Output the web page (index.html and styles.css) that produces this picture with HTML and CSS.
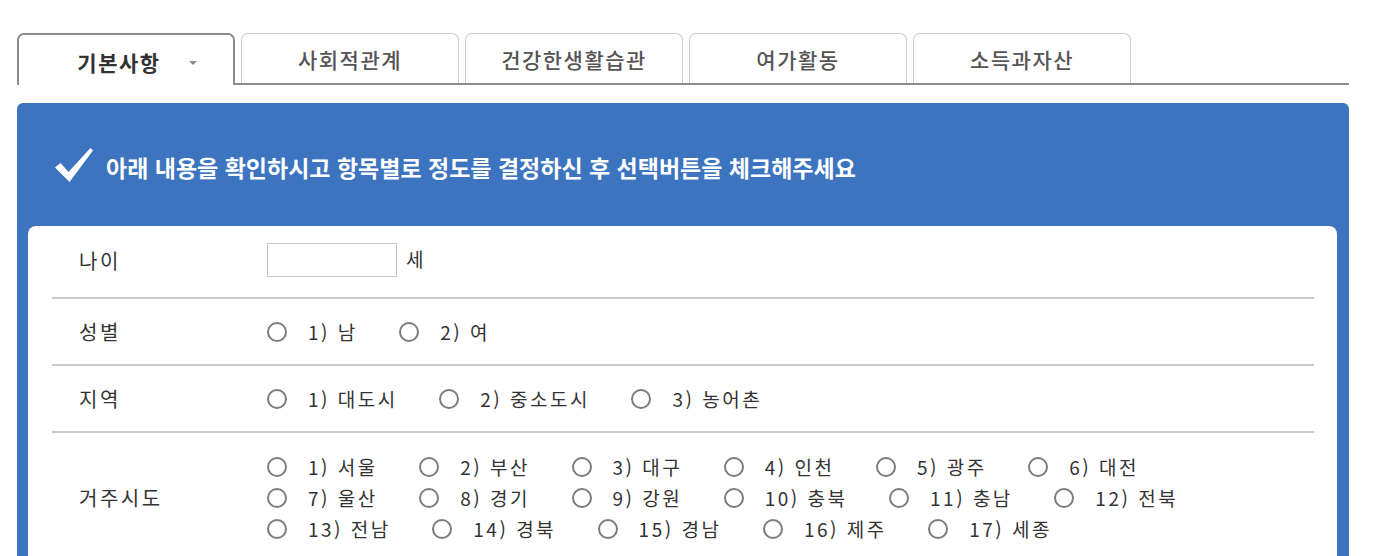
FILE: index.html
```html
<!DOCTYPE html>
<html lang="ko">
<head>
<meta charset="utf-8">
<title>기본사항</title>
<link rel="stylesheet" href="styles.css">
</head>
<body>
<div class="page">
  <nav class="tabs">
    <div class="tab active"><span>기본사항</span><span class="caret"></span></div>
    <div class="tab">사회적관계</div>
    <div class="tab">건강한생활습관</div>
    <div class="tab">여가활동</div>
    <div class="tab">소득과자산</div>
  </nav>

  <section class="panel">
    <header class="panel-head">
      <svg class="check" width="38" height="34" viewBox="0 0 38 34">
        <path d="M0 19.5 L5.5 15 L13.5 24 L35.5 0 L38 2.5 L14.5 34 Z" fill="#fff"/>
      </svg>
      <h1>아래 내용을 확인하시고 항목별로 정도를 결정하신 후 선택버튼을 체크해주세요</h1>
    </header>

    <div class="panel-body">
      <div class="row first">
        <div class="label">나이</div>
        <div class="value">
          <input class="age" type="text"><span class="unit">세</span>
        </div>
      </div>

      <div class="row">
        <div class="label">성별</div>
        <div class="value">
          <div class="line">
            <label class="opt"><input type="radio" name="sex"><span>1) 남</span></label>
            <label class="opt"><input type="radio" name="sex"><span>2) 여</span></label>
          </div>
        </div>
      </div>

      <div class="row">
        <div class="label">지역</div>
        <div class="value">
          <div class="line">
            <label class="opt"><input type="radio" name="area"><span>1) 대도시</span></label>
            <label class="opt"><input type="radio" name="area"><span>2) 중소도시</span></label>
            <label class="opt"><input type="radio" name="area"><span>3) 농어촌</span></label>
          </div>
        </div>
      </div>

      <div class="row last">
        <div class="label">거주시도</div>
        <div class="value">
          <div class="line">
            <label class="opt"><input type="radio" name="city"><span>1) 서울</span></label>
            <label class="opt"><input type="radio" name="city"><span>2) 부산</span></label>
            <label class="opt"><input type="radio" name="city"><span>3) 대구</span></label>
            <label class="opt"><input type="radio" name="city"><span>4) 인천</span></label>
            <label class="opt"><input type="radio" name="city"><span>5) 광주</span></label>
            <label class="opt"><input type="radio" name="city"><span>6) 대전</span></label>
          </div>
          <div class="line">
            <label class="opt"><input type="radio" name="city"><span>7) 울산</span></label>
            <label class="opt"><input type="radio" name="city"><span>8) 경기</span></label>
            <label class="opt"><input type="radio" name="city"><span>9) 강원</span></label>
            <label class="opt"><input type="radio" name="city"><span>10) 충북</span></label>
            <label class="opt"><input type="radio" name="city"><span>11) 충남</span></label>
            <label class="opt"><input type="radio" name="city"><span>12) 전북</span></label>
          </div>
          <div class="line">
            <label class="opt"><input type="radio" name="city"><span>13) 전남</span></label>
            <label class="opt"><input type="radio" name="city"><span>14) 경북</span></label>
            <label class="opt"><input type="radio" name="city"><span>15) 경남</span></label>
            <label class="opt"><input type="radio" name="city"><span>16) 제주</span></label>
            <label class="opt"><input type="radio" name="city"><span>17) 세종</span></label>
          </div>
        </div>
      </div>
    </div>
  </section>
</div>
</body>
</html>
```

FILE: styles.css
```css
* { box-sizing: border-box; }

html, body {
  margin: 0;
  padding: 0;
  background: #fff;
}

body {
  font-family: "Noto Sans CJK KR", "Noto Sans", sans-serif;
  color: #333;
}

.page {
  padding: 33px 35px 0 17px;
  width: 1384px;
}

/* ---------- tabs ---------- */
.tabs {
  display: flex;
  gap: 6px;
  height: 52px;
  border-bottom: 2px solid #8c8c8c;
}

.tab {
  width: 218px;
  height: 50px;
  display: flex;
  align-items: center;
  justify-content: center;
  border: 1px solid #cfcfcf;
  border-bottom: none;
  border-radius: 7px 7px 0 0;
  background: #fff;
  font-size: 21px;
  font-weight: 500;
  color: #555;
  letter-spacing: 1.5px;
  padding-top: 1px;
}

.tab.active {
  height: 52px;
  margin-bottom: -2px;
  border: 2px solid #8c8c8c;
  border-bottom: none;
  font-weight: 700;
  color: #333;
  gap: 28px;
  padding-left: 22px;
  padding-top: 3px;
}

.caret {
  width: 0;
  height: 0;
  border-left: 4.5px solid transparent;
  border-right: 4.5px solid transparent;
  border-top: 4px solid #8a8a8a;
  margin-top: 2px;
}

/* ---------- panel ---------- */
.panel {
  margin-top: 18px;
  background: #3c74bf;
  border-radius: 6px 6px 0 0;
  padding: 0 12px 0 11px;
}

.panel-head {
  height: 123px;
  display: flex;
  align-items: center;
  gap: 13px;
  padding: 4px 0 0 27px;
}

.check { flex: none; margin-top: -4px; }

.panel-head h1 {
  margin: 0;
  font-size: 23px;
  font-weight: 700;
  letter-spacing: 0;
  color: #fff;
}

.panel-body {
  background: #fff;
  border-radius: 8px 8px 0 0;
  padding: 0 23px 0 24px;
}

/* ---------- rows ---------- */
.row {
  display: grid;
  grid-template-columns: 215px 1fr;
  align-items: center;
  padding: 17px 0;
  border-bottom: 2px solid #cacaca;
  font-size: 19px;
  letter-spacing: 2.5px;
}

.row.first { padding: 17px 0 20px; }
.row.last { border-bottom: none; padding-top: 18px; }

.label {
  padding-left: 27px;
  font-size: 20px;
  color: #333;
}

.value { display: flex; flex-direction: column; }

.row.first .value {
  flex-direction: row;
  align-items: center;
}

.age {
  width: 130px;
  height: 34px;
  border: 1px solid #c6c6c6;
  margin: 0 9px 0 0;
  padding: 0;
}

.unit { margin-top: -4px; }

.line {
  display: flex;
  align-items: center;
  height: 31px;
}

.opt {
  display: flex;
  align-items: center;
  margin-right: 41.5px;
}

.opt input {
  appearance: none;
  -webkit-appearance: none;
  width: 20px;
  height: 20px;
  margin: 0 21px 0 0;
  border: 2px solid #7c7c7c;
  border-radius: 50%;
  background: #fff;
  flex: none;
}

.opt span { white-space: nowrap; }
```
